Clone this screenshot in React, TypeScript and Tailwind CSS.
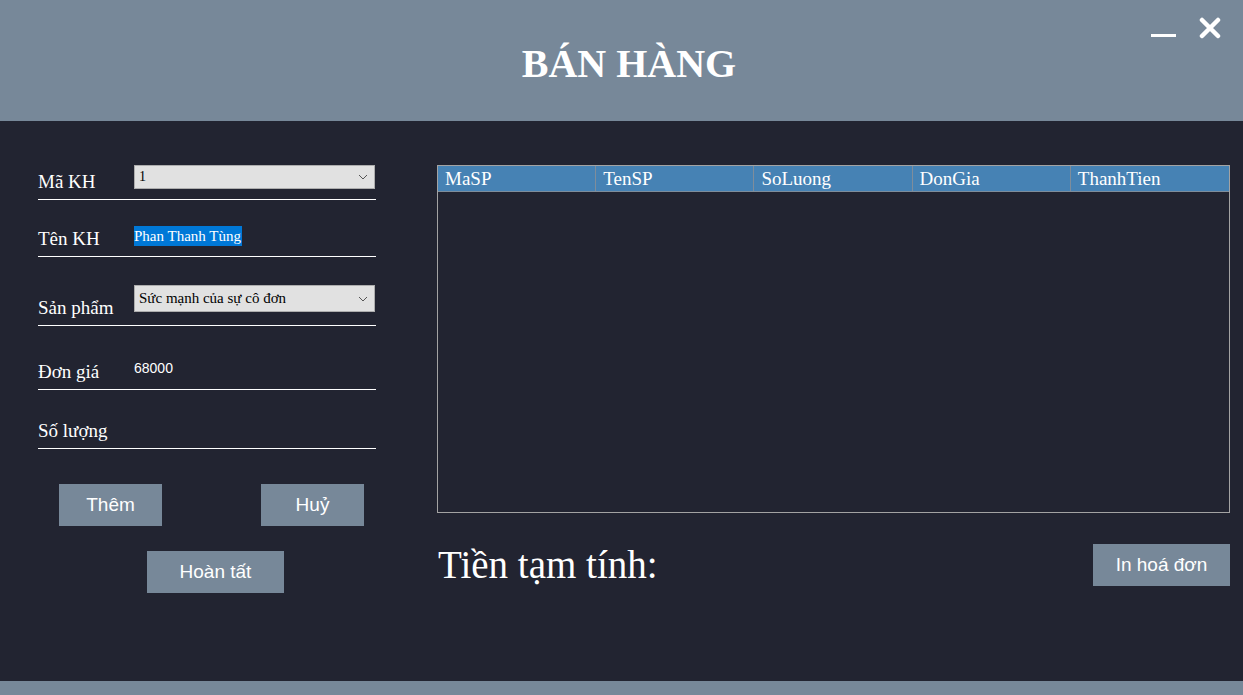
import React from "react";

const serif = "font-['Liberation_Serif','Times_New_Roman',serif]";
const sans = "font-['Liberation_Sans',Arial,sans-serif]";

function Chevron() {
    return (
        <svg width="10" height="6" viewBox="0 0 10 6" className="shrink-0">
            <path d="M1 1l4 4 4-4" fill="none" stroke="#555" strokeWidth="1" />
        </svg>
    );
}

function Combo({ value, textClass }: { value: string; textClass: string }) {
    return (
        <div className="flex h-full w-[241px] items-center justify-between border border-[#adadad] bg-[#e1e1e1] pl-[4px] pr-[6px]">
            <span className={`${serif} ${textClass} leading-none text-black`}>{value}</span>
            <Chevron />
        </div>
    );
}

function Row({
    label,
    height,
    children,
}: {
    label: string;
    height: string;
    children?: React.ReactNode;
}) {
    return (
        <div className={`ml-[38px] flex w-[338px] border-b border-white ${height}`}>
            <div className={`w-[96px] self-end pb-[8px] ${serif} text-[19px] leading-none text-white`}>
                {label}
            </div>
            <div className="self-start">{children}</div>
        </div>
    );
}

function Btn({ label, width }: { label: string; width: string }) {
    return (
        <button className={`h-[42px] ${width} bg-[#778899] ${sans} text-[19px] text-white`}>
            {label}
        </button>
    );
}

const columns = ["MaSP", "TenSP", "SoLuong", "DonGia", "ThanhTien"];

export default function App(): React.ReactElement {
    return (
        <div className="flex h-[695px] w-[1243px] flex-col overflow-hidden bg-[#222431]">
            {/* Title bar */}
            <header className="relative flex h-[121px] shrink-0 items-start justify-center bg-[#778899] pl-[15px] pt-[44px]">
                <h1 className={`${serif} text-[40px] font-bold leading-none text-white`}>BÁN HÀNG</h1>
                <div className="absolute right-[22px] top-[17px] flex items-center gap-[23px]">
                    <span className="mt-[14px] h-[3px] w-[25px] bg-white" />
                    <svg width="22" height="22" viewBox="0 0 22 22">
                        <path d="M3 3l16 16M19 3L3 19" stroke="white" strokeWidth="4.5" strokeLinecap="round" />
                    </svg>
                </div>
            </header>

            <main className="flex flex-1">
                {/* Form */}
                <section className="w-[437px] shrink-0 pt-[39px]">
                    <Row label="Mã KH" height="h-[40px]">
                        <div className="mt-[5px] h-[24px]">
                            <Combo value="1" textClass="text-[14px]" />
                        </div>
                    </Row>
                    <Row label="Tên KH" height="h-[57px]">
                        <span className={`mt-[26px] inline-block h-[20px] bg-[#0078d7] pr-[1px] ${serif} text-[15px] leading-[20px] text-white`}>
                            Phan Thanh Tùng
                        </span>
                    </Row>
                    <Row label="Sản phẩm" height="h-[69px]">
                        <div className="mt-[28px] h-[27px]">
                            <Combo value="Sức mạnh của sự cô đơn" textClass="text-[15px]" />
                        </div>
                    </Row>
                    <Row label="Đơn giá" height="h-[64px]">
                        <div className={`mt-[35px] ${sans} text-[14px] leading-none text-white`}>68000</div>
                    </Row>
                    <Row label="Số lượng" height="h-[59px]" />

                    <div className="ml-[59px] mt-[35px] flex gap-[99px]">
                        <Btn label="Thêm" width="w-[103px]" />
                        <Btn label="Huỷ" width="w-[103px]" />
                    </div>
                    <div className="ml-[147px] mt-[25px]">
                        <Btn label="Hoàn tất" width="w-[137px]" />
                    </div>
                </section>

                {/* Cart grid */}
                <section className="w-[793px] pt-[44px]">
                    <div className="h-[348px] border border-[#a3a3a3]">
                        <div className="grid h-[26px] grid-cols-5 border-b border-[#7f8d9b] bg-[#4682b4]">
                            {columns.map((c, i) => (
                                <div
                                    key={c}
                                    className={`pl-[7px] ${serif} text-[19px] leading-[25px] text-white ${
                                        i < columns.length - 1 ? "border-r border-[#7f8d9b]" : ""
                                    }`}
                                >
                                    {c}
                                </div>
                            ))}
                        </div>
                    </div>

                    <div className="mt-[31px] flex items-start justify-between">
                        <div className={`pl-[1px] pt-[1px] ${serif} text-[39px] leading-none text-white`}>Tiền tạm tính:</div>
                        <Btn label="In hoá đơn" width="w-[137px]" />
                    </div>
                </section>
            </main>

            <footer className="h-[14px] shrink-0 bg-[#778899]" />
        </div>
    );
}
